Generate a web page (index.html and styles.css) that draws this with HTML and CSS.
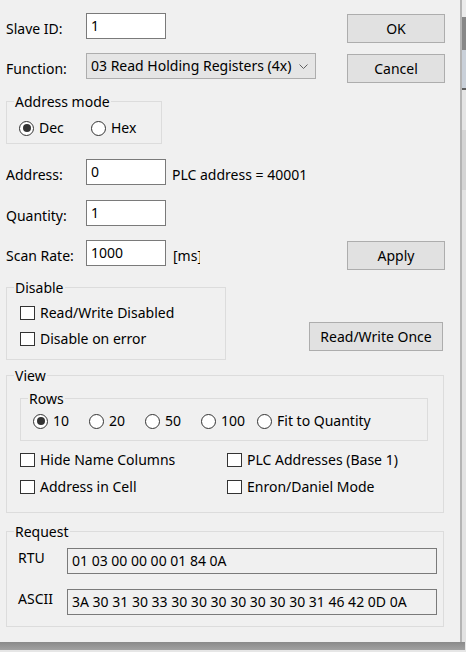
FILE: index.html
```html
<!DOCTYPE html>
<html>
<head>
<meta charset="utf-8">
<link rel="stylesheet" href="styles.css">
</head>
<body>
<div class="screen">
  <div class="top">
    <div class="dialog">
      <div class="row r-slave">
        <div class="field"><span class="lbl">Slave ID:</span><div class="input">1</div></div>
        <div class="btn">OK</div>
      </div>
      <div class="row r-func">
        <div class="field"><span class="lbl">Function:</span>
          <div class="combo"><span>03 Read Holding Registers (4x)</span>
            <svg class="chev" width="9" height="6" viewBox="0 0 9 6"><polyline points="0.5,0.5 4.5,4.5 8.5,0.5" fill="none" stroke="#606060" stroke-width="1"/></svg>
          </div>
        </div>
        <div class="btn">Cancel</div>
      </div>
      <div class="group g-addr">
        <div class="legend">Address mode</div>
        <div class="radios radios-addr">
          <div class="radio-item"><span class="radio on"></span><span>Dec</span></div>
          <div class="radio-item"><span class="radio"></span><span>Hex</span></div>
        </div>
      </div>
      <div class="row r-address">
        <div class="field"><span class="lbl">Address:</span><div class="input">0</div></div>
        <span class="note">PLC address = 40001</span>
      </div>
      <div class="row r-qty">
        <div class="field"><span class="lbl">Quantity:</span><div class="input">1</div></div>
      </div>
      <div class="row r-scan">
        <div class="field"><span class="lbl">Scan Rate:</span><div class="input">1000</div><span class="unit">[ms]</span></div>
        <div class="btn">Apply</div>
      </div>
      <div class="row r-disable">
        <div class="group g-disable">
          <div class="legend">Disable</div>
          <div class="checks">
            <div class="check-item"><span class="box"></span><span>Read/Write Disabled</span></div>
            <div class="check-item"><span class="box"></span><span>Disable on error</span></div>
          </div>
        </div>
        <div class="btn btn-once">Read/Write Once</div>
      </div>
      <div class="group g-view">
        <div class="legend">View</div>
        <div class="group g-rows">
          <div class="legend">Rows</div>
          <div class="radios radios-rows">
            <div class="radio-item"><span class="radio on"></span><span>10</span></div>
            <div class="radio-item"><span class="radio"></span><span>20</span></div>
            <div class="radio-item"><span class="radio"></span><span>50</span></div>
            <div class="radio-item"><span class="radio"></span><span>100</span></div>
            <div class="radio-item last"><span class="radio"></span><span>Fit to Quantity</span></div>
          </div>
        </div>
        <div class="check-grid">
          <div class="check-item"><span class="box"></span><span>Hide Name Columns</span></div>
          <div class="check-item"><span class="box"></span><span>PLC Addresses (Base 1)</span></div>
          <div class="check-item"><span class="box"></span><span>Address in Cell</span></div>
          <div class="check-item"><span class="box"></span><span>Enron/Daniel Mode</span></div>
        </div>
      </div>
      <div class="group g-req">
        <div class="legend">Request</div>
        <div class="req-row"><span class="req-lbl">RTU</span><div class="ro">01 03 00 00 00 01 84 0A</div></div>
        <div class="req-row"><span class="req-lbl">ASCII</span><div class="ro">3A 30 31 30 33 30 30 30 30 30 30 30 31 46 42 0D 0A</div></div>
      </div>
    </div>
    <div class="strip">
      <div class="s1"></div><div class="s2"></div><div class="s3"></div><div class="s4"></div><div class="s5"></div><div class="s6"></div><div class="s7"></div>
    </div>
  </div>
  <div class="bottom-shade"></div>
</div>
</body>
</html>
```

FILE: styles.css
```css
* { box-sizing: border-box; }
html, body { margin: 0; padding: 0; }
body {
  width: 466px;
  height: 652px;
  overflow: hidden;
  background: #e6e6e6;
  font-family: "Noto Sans", "DejaVu Sans", sans-serif;
  font-size: 14px;
  color: #000;
}
.screen { display: flex; flex-direction: column; width: 466px; height: 652px; }
.top { display: flex; height: 642px; }
.dialog {
  width: 460px;
  height: 642px;
  background: #f0f0f0;
  padding: 13px 15px 0 6px;
  display: flex;
  flex-direction: column;
}
.strip { flex: 1; display: flex; flex-direction: column; border-left: 2px solid #b4b4b4; }
.strip .s1 { height: 17px; background: #ebebeb; }
.strip .s2 { height: 33px; background: #878787; }
.strip .s3 { height: 38px; background: #c9d0d9; }
.strip .s4 { height: 2px; background: #5e5e5e; }
.strip .s5 { height: 40px; background: #e4e4e4; }
.strip .s6 { height: 60px; background: #d4d4d4; }
.strip .s7 { flex: 1; background: #e2e2e2; }
.bottom-shade { height: 8px; background: linear-gradient(#8a8a8a, #a2a2a2); margin-right: 1px; }

.row { display: flex; justify-content: space-between; align-items: flex-start; }
.field { display: flex; align-items: flex-start; }
.lbl { width: 80px; line-height: 18px; margin-top: 7px; white-space: nowrap; }
.input {
  width: 80px; height: 26px;
  background: #fff; border: 1px solid #7a7a7a;
  padding-left: 4px; line-height: 24px; white-space: nowrap;
}
.btn {
  width: 98px; height: 29px;
  background: #e1e1e1; border: 1px solid #adadad;
  display: flex; align-items: center; justify-content: center;
  margin-top: 1px; white-space: nowrap;
}
.combo {
  width: 230px; height: 26px;
  background: #e5e5e5; border: 1px solid #adadad;
  display: flex; align-items: center; justify-content: space-between;
  padding: 0 7px 0 4px; line-height: 24px; white-space: nowrap;
}
.chev { display: block; margin-top: 1px; }

.r-func { margin-top: 10px; }
.r-address { margin-top: 15px; justify-content: flex-start; }
.r-qty { margin-top: 15px; }
.r-scan { margin-top: 14px; }
.note { margin-left: 6px; line-height: 18px; margin-top: 7px; white-space: nowrap; }
.unit { margin-left: 7px; width: 27px; overflow: hidden; white-space: nowrap; line-height: 18px; margin-top: 7px; }

.group { border: 1px solid #dcdcdc; }
.legend {
  line-height: 18px; margin: -9px 0 0 7px; padding: 0 1px;
  background: #f0f0f0; width: fit-content; white-space: nowrap;
}
.g-addr { margin-top: 18px; width: 156px; height: 43px; }
.radios { display: flex; align-items: center; }
.radio-item { display: flex; align-items: center; gap: 5px; line-height: 18px; white-space: nowrap; flex-shrink: 0; }
.radio {
  width: 15px; height: 15px; border-radius: 50%; flex-shrink: 0;
  border: 1px solid #333; background: #fff;
  display: flex; align-items: center; justify-content: center;
}
.radio.on::after { content: ""; width: 8px; height: 8px; border-radius: 50%; background: #333; }
.radios-addr { margin: 8px 0 0 12px; }
.radios-addr .radio-item { width: 72px; }

.r-disable { margin-top: 17px; }
.g-disable { width: 220px; height: 73px; }
.checks { display: flex; flex-direction: column; gap: 8px; margin: 7px 0 0 13px; }
.check-item { display: flex; align-items: center; gap: 5px; line-height: 18px; white-space: nowrap; }
.box { width: 15px; height: 14px; border: 1px solid #333; background: #fff; flex-shrink: 0; }
.btn-once { width: 134px; margin-top: 35px; margin-right: 2px; }

.g-view { margin-top: 15px; width: 438px; height: 138px; }
.g-rows { margin: 13px 0 0 13px; width: 408px; height: 43px; }
.radios-rows { margin: 4px 0 0 12px; }
.radios-rows .radio-item { width: 56px; }
.radios-rows .radio-item.last { width: auto; }
.check-grid {
  display: grid; grid-template-columns: 207px 1fr;
  row-gap: 9px; margin: 10px 0 0 13px;
}

.g-req { margin-top: 18px; width: 438px; height: 96px; }
.req-row { display: flex; align-items: flex-start; margin: 7px 0 0 11px; }
.req-row + .req-row { margin-top: 15px; }
.req-lbl { width: 49px; line-height: 18px; margin-top: 1px; }
.ro {
  width: 370px; height: 26px;
  background: #f0f0f0; border: 1px solid #7a7a7a;
  padding-left: 4px; line-height: 24px; white-space: nowrap;
}
```
